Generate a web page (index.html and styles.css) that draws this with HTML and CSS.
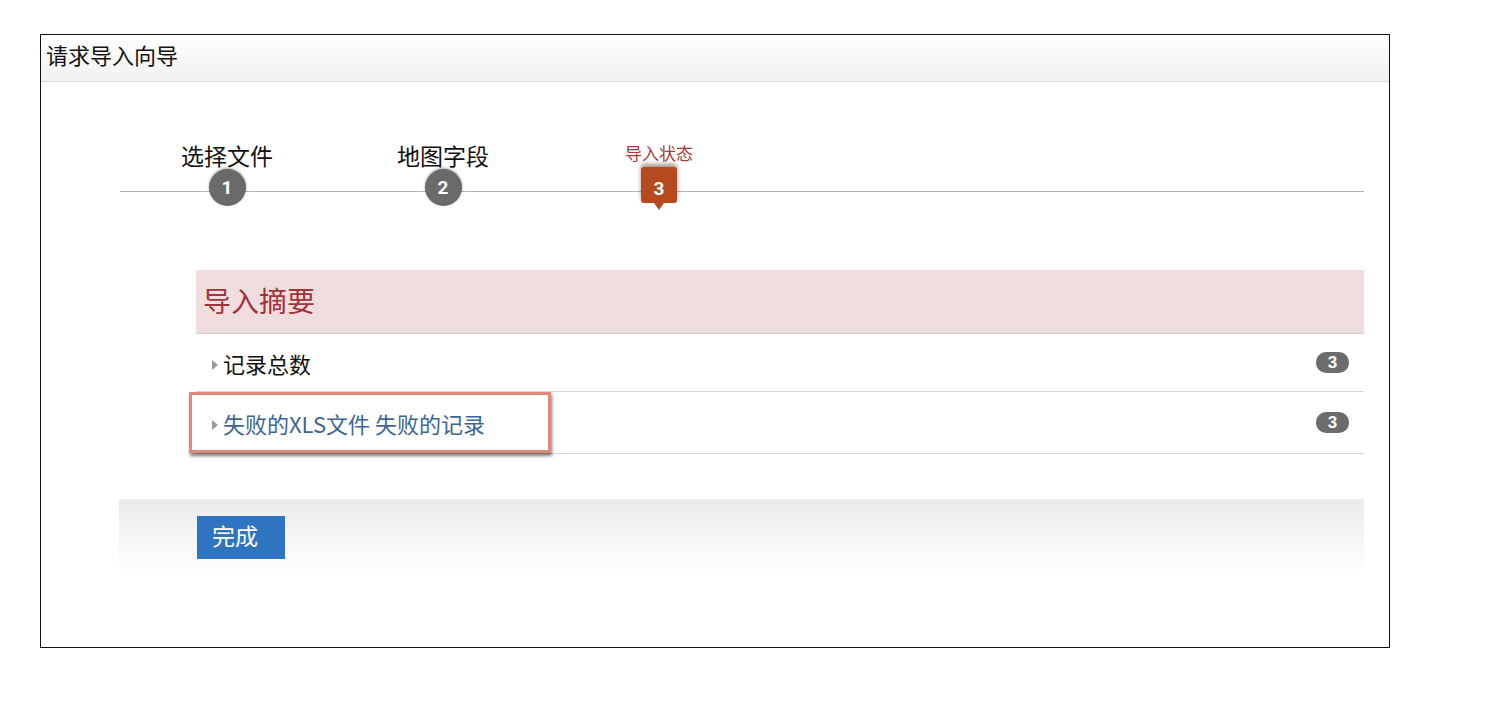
FILE: index.html
```html
<!DOCTYPE html>
<html lang="zh-CN">
<head>
    <meta charset="UTF-8">
    <title>请求导入向导</title>
    <link rel="stylesheet" href="styles.css">
</head>
<body>
    <div class="wizard">
        <div class="wizard-header">请求导入向导</div>

        <div class="wizard-body">
            <!-- step indicator -->
            <div class="steps">
                <div class="step done">
                    <div class="step-label">选择文件</div>
                    <div class="step-num">1</div>
                </div>
                <div class="step done">
                    <div class="step-label">地图字段</div>
                    <div class="step-num">2</div>
                </div>
                <div class="step current">
                    <div class="step-label">导入状态</div>
                    <div class="step-num">3</div>
                </div>
            </div>

            <div class="summary">
                <div class="summary-title">导入摘要</div>
                <div class="summary-row">
                    <span class="row-label"><span class="arrow"></span>记录总数</span>
                    <span class="badge">3</span>
                </div>
                <div class="summary-row failed">
                    <span class="row-label link"><span class="arrow"></span>失败的XLS文件 失败的记录</span>
                    <span class="badge">3</span>
                    <span class="highlight"></span>
                </div>
            </div>

            <div class="actions">
                <button type="button" class="button">完成</button>
            </div>
        </div>
    </div>
</body>
</html>
```

FILE: styles.css
```css
body {
    margin: 0;
    padding: 34px 0 0 40px;
    font-family: "Noto Sans CJK SC", "Liberation Sans", sans-serif;
    background: #fff;
    color: #111;
}

.wizard {
    width: 1348px;
    height: 612px;
    border: 1px solid #111;
}

.wizard-header {
    height: 46px;
    padding-left: 5px;
    font-size: 22px;
    line-height: 39px;
    border-bottom: 1px solid #dcdcdc;
    background: linear-gradient(#ffffff, #f1f1f1);
}

.wizard-body {
    padding: 61px 25px 0 78px;
}

/* steps */
.steps {
    position: relative;
    display: flex;
    height: 68px;
}

.steps::before {
    content: "";
    position: absolute;
    left: 1px;
    right: 0;
    top: 48px;
    height: 1px;
    background: #b4b4b4;
}

.step {
    position: relative;
    width: 216px;
    display: flex;
    flex-direction: column;
    align-items: center;
}

.step-label {
    height: 26px;
    font-size: 23px;
    line-height: 24px;
    color: #111;
}

.step-num {
    position: relative;
    width: 37px;
    height: 37px;
    border-radius: 50%;
    background: #6a6a6a;
    color: #fff;
    font-family: Roboto, sans-serif;
    font-weight: bold;
    font-size: 19px;
    line-height: 38px;
    text-align: center;
    box-shadow: 0 -1px 3px rgba(0, 0, 0, 0.35);
}

.step.current .step-label {
    font-size: 17px;
    color: #a63a3a;
    height: 24px;
    line-height: 20px;
}

.step.current .step-num {
    width: 36px;
    height: 36px;
    border-radius: 3px;
    background: #b44a1d;
    font-size: 19px;
    line-height: 44px;
    box-shadow: 0 -3px 4px rgba(60, 20, 0, 0.45);
}

.step.current .step-num::after {
    content: "";
    position: absolute;
    left: 13px;
    bottom: -7px;
    border-left: 5px solid transparent;
    border-right: 5px solid transparent;
    border-top: 7px solid #b44a1d;
}

/* summary */
.summary {
    margin: 59px 0 0 77px;
}

.summary-title {
    height: 63px;
    padding-left: 7px;
    font-size: 28px;
    line-height: 60px;
    color: #a0343a;
    background: #f0dede;
    border-bottom: 1px solid #d6c8c8;
}

.summary-row {
    position: relative;
    display: flex;
    align-items: center;
    justify-content: space-between;
    height: 57px;
    padding: 0 15px 0 16px;
    border-bottom: 1px solid #d8d8d8;
}

.summary-row.failed {
    height: 61px;
}

.row-label {
    display: flex;
    align-items: center;
    font-size: 22px;
    color: #111;
}

.row-label.link {
    color: #3d6595;
}

.arrow {
    width: 0;
    height: 0;
    margin: 5px 5px 0 0;
    border-top: 5px solid transparent;
    border-bottom: 5px solid transparent;
    border-left: 6px solid #9a9a9a;
}

.badge {
    min-width: 33px;
    height: 21px;
    border-radius: 10px;
    background: #6c6c6c;
    color: #fff;
    font-family: "Liberation Sans", sans-serif;
    font-weight: bold;
    font-size: 17px;
    line-height: 21px;
    text-align: center;
}

.highlight {
    position: absolute;
    left: -7px;
    top: 0;
    width: 356px;
    height: 55px;
    border: 3px solid #e2877b;
    box-shadow: 1px 3px 3px rgba(0, 0, 0, 0.5);
}

/* footer */
.actions {
    margin-top: 45px;
    height: 58px;
    padding: 17px 0 0 78px;
    background: linear-gradient(#ebebeb, #ffffff);
}

.button {
    width: 88px;
    height: 43px;
    border: none;
    background: #2e74c0;
    color: #fff;
    font-family: "Noto Sans CJK SC", sans-serif;
    font-size: 23px;
    padding: 0 0 6px 15px;
    text-align: left;
    cursor: pointer;
}
```
